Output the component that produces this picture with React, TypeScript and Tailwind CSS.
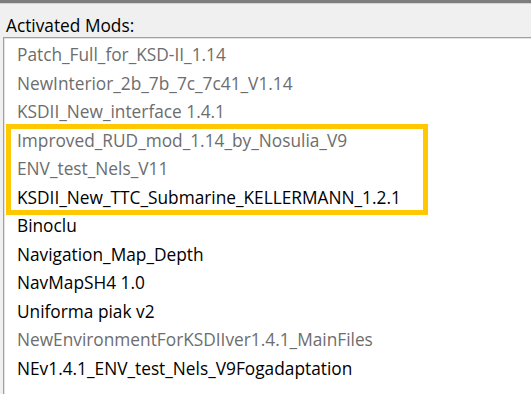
const mods = [
  { name: "Patch_Full_for_KSD-II_1.14", dim: true },
  { name: "NewInterior_2b_7b_7c_7c41_V1.14", dim: true },
  { name: "KSDII_New_interface 1.4.1", dim: true },
  { name: "Improved_RUD_mod_1.14_by_Nosulia_V9", dim: true },
  { name: "ENV_test_Nels_V11", dim: true },
  { name: "KSDII_New_TTC_Submarine_KELLERMANN_1.2.1", dim: false },
  { name: "Binoclu", dim: false },
  { name: "Navigation_Map_Depth", dim: false },
  { name: "NavMapSH4 1.0", dim: false },
  { name: "Uniforma piak v2", dim: false },
  { name: "NewEnvironmentForKSDIIver1.4.1_MainFiles", dim: true },
  { name: "NEv1.4.1_ENV_test_Nels_V9Fogadaptation", dim: false },
];

export default function App() {
  return (
    <div
      className="w-[531px] h-[394px] overflow-hidden bg-[#f0f0f0] flex flex-col"
      style={{ fontFamily: '"Open Sans", "Noto Sans", sans-serif' }}
    >
      {/* window frame edge */}
      <div className="h-[3px] bg-[#7d7d7d] shrink-0" />
      <div className="h-[1px] bg-[#d4d4d4] shrink-0" />

      <div className="h-[33px] shrink-0 pl-[6px] flex items-end pb-[3px]">
        <span className="text-[17.3px] leading-none text-black">Activated Mods:</span>
      </div>

      {/* listbox */}
      <div className="flex-1 ml-[3px] border-l border-t border-[#a0a0a0] bg-white relative">
        <div className="border-l border-t border-[#e3e3e3] h-full pt-[2px]">
          {mods.map((m) => (
            <div
              key={m.name}
              className={`h-[28.5px] pl-[12px] flex items-center whitespace-nowrap text-[17.3px] ${
                m.dim ? "text-[#6d6d6d]" : "text-black"
              }`}
            >
              {m.name}
            </div>
          ))}
        </div>

        {/* highlight annotation */}
        <div className="absolute left-[2px] top-[86px] w-[422px] h-[91px] border-[5px] border-[#ffc800] pointer-events-none" />
      </div>
    </div>
  );
}
